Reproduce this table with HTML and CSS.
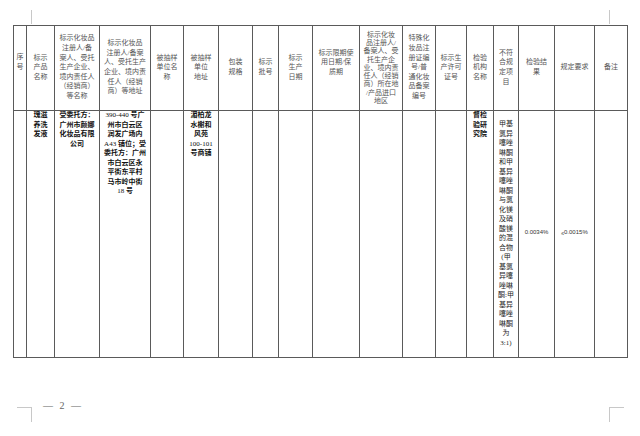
FILE: index.html
```html
<!DOCTYPE html>
<html lang="zh-CN">
<head>
<meta charset="utf-8">
<title>抽检结果</title>
<link rel="stylesheet" href="styles.css">
</head>
<body>
<div class="page">
  <div class="marks-top"><span class="tick"></span><span class="tick"></span></div>

  <div class="sheet">
    <div class="cell hd lift"><div class="txt">序<br>号</div></div>
    <div class="cell hd"><div class="txt">标示<br>产品<br>名称</div></div>
    <div class="cell hd"><div class="txt">标示化妆品<br>注册人/备<br>案人、受托<br>生产企业、<br>境内责任人<br>（经销商）<br>等名称</div></div>
    <div class="cell hd"><div class="txt">标示化妆品<br>注册人/备案<br>人、受托生产<br>企业、境内责<br>任人（经销<br>商）等地址</div></div>
    <div class="cell hd"><div class="txt">被抽样<br>单位名<br>称</div></div>
    <div class="cell hd"><div class="txt">被抽样<br>单位<br>地址</div></div>
    <div class="cell hd"><div class="txt">包装<br>规格</div></div>
    <div class="cell hd"><div class="txt">标示<br>批号</div></div>
    <div class="cell hd"><div class="txt">标示<br>生产<br>日期</div></div>
    <div class="cell hd lift"><div class="txt">标示限期使<br>用日期/保<br>质期</div></div>
    <div class="cell hd tight"><div class="txt">标示化妆<br>品注册人/<br>备案人、受<br>托生产企<br>业、境内责<br>任人（经销<br>商）所在地<br>/产品进口<br>地区</div></div>
    <div class="cell hd"><div class="txt">特殊化<br>妆品注<br>册证编<br>号/普<br>通化妆<br>品备案<br>编号</div></div>
    <div class="cell hd"><div class="txt">标示生<br>产许可<br>证号</div></div>
    <div class="cell hd"><div class="txt">检验<br>机构<br>名称</div></div>
    <div class="cell hd"><div class="txt">不符<br>合规<br>定项<br>目</div></div>
    <div class="cell hd"><div class="txt">检验结<br>果</div></div>
    <div class="cell hd"><div class="txt">规定要求</div></div>
    <div class="cell hd"><div class="txt">备注</div></div>

    <div class="cell bd"></div>
    <div class="cell bd strong"><div class="txt">瑰滋<br>养洗<br>发液</div></div>
    <div class="cell bd strong"><div class="txt">受委托方：<br>广州市颜娜<br>化妆品有限<br>公司</div></div>
    <div class="cell bd strong"><div class="txt"><span class="lat">390-440 </span>号广<br>州市白云区<br>润发广场内<br><span class="lat">A43 </span>铺位；受<br>委托方：广州<br>市白云区永<br>平街东平村<br>马市岭中街<br><span class="lat">18 </span>号</div></div>
    <div class="cell bd"></div>
    <div class="cell bd strong"><div class="txt">湄柏龙<br>水榭和<br>风苑<br><span class="lat">100-101</span><br>号商铺</div></div>
    <div class="cell bd"></div>
    <div class="cell bd"></div>
    <div class="cell bd"></div>
    <div class="cell bd"></div>
    <div class="cell bd"></div>
    <div class="cell bd"></div>
    <div class="cell bd"></div>
    <div class="cell bd strong"><div class="txt">督检<br>验研<br>究院</div></div>
    <div class="cell bd mid"><div class="txt">甲基<br>氯异<br>噻唑<br>啉酮<br>和甲<br>基异<br>噻唑<br>啉酮<br>与氯<br>化镁<br>及硝<br>酸镁<br>的混<br>合物<br>(甲<br>基氯<br>异噻<br>唑啉<br>酮:甲<br>基异<br>噻唑<br>啉酮<br>为<br>3:1)</div></div>
    <div class="cell bd mid num"><div class="txt">0.0034%</div></div>
    <div class="cell bd mid num"><div class="txt"><span class="le">≤</span>0.0015%</div></div>
    <div class="cell bd"></div>
  </div>

  <div class="footer">
    <span class="crop crop-l"></span>
    <span class="pageno">— 2 —</span>
    <span class="crop crop-r"></span>
  </div>
</div>
</body>
</html>
```

FILE: styles.css
```css
html, body {
  margin: 0;
  padding: 0;
  background: #ffffff;
}

.page {
  width: 640px;
  height: 436px;
  box-sizing: border-box;
  padding-top: 10px;
  background: #ffffff;
  font-family: "Liberation Serif", "Noto Sans CJK SC", serif;
  overflow: hidden;
}

.marks-top {
  height: 15px;
  display: flex;
  justify-content: space-between;
  padding: 0 30px 0 31px;
}

.tick {
  width: 1px;
  height: 14px;
  background: #c8c8c8;
}

.sheet {
  display: grid;
  grid-template-columns: 12px 27px 44px 50px 32px 34px 33px 25px 33px 46px 42px 32px 30px 26px 24px 35px 39px 32px;
  grid-template-rows: 84px 246px;
  gap: 1px;
  padding: 1px;
  background: #5a5a5a;
  width: max-content;
  margin-left: 13px;
}

.cell {
  background: #ffffff;
  display: flex;
  align-items: center;
  justify-content: center;
  text-align: center;
  overflow: hidden;
}

.txt {
  white-space: nowrap;
}

.hd {
  font-size: 7px;
  line-height: 9.6px;
  color: #555555;
}

.hd.lift .txt {
  padding-bottom: 10px;
}

.hd.tight {
  line-height: 8.2px;
}

.bd {
  align-items: flex-start;
  font-size: 7px;
  line-height: 9.5px;
  color: #1e1e1e;
}

.bd.strong {
  font-weight: 700;
  color: #111111;
}

.lat {
  font-weight: 400;
}

.bd.mid {
  align-items: center;
}

.bd.num {
  font-family: "Liberation Sans", "Noto Sans CJK SC", sans-serif;
  font-size: 6px;
  color: #333333;
  padding-bottom: 2px;
}

.le {
  font-size: 5px;
  vertical-align: -1px;
}

.footer {
  margin-top: 42px;
  height: 22px;
  display: flex;
  align-items: flex-start;
}

.crop {
  width: 14px;
  height: 14px;
  margin-top: 7px;
  border-top: 1px solid #c8c8c8;
}

.crop-l {
  margin-left: 17px;
  border-right: 1px solid #c8c8c8;
}

.crop-r {
  margin-left: auto;
  margin-right: 16px;
  border-left: 1px solid #c8c8c8;
}

.pageno {
  margin-left: 11px;
  font-size: 10px;
  line-height: 12px;
  word-spacing: 4px;
  color: #666666;
}
```
